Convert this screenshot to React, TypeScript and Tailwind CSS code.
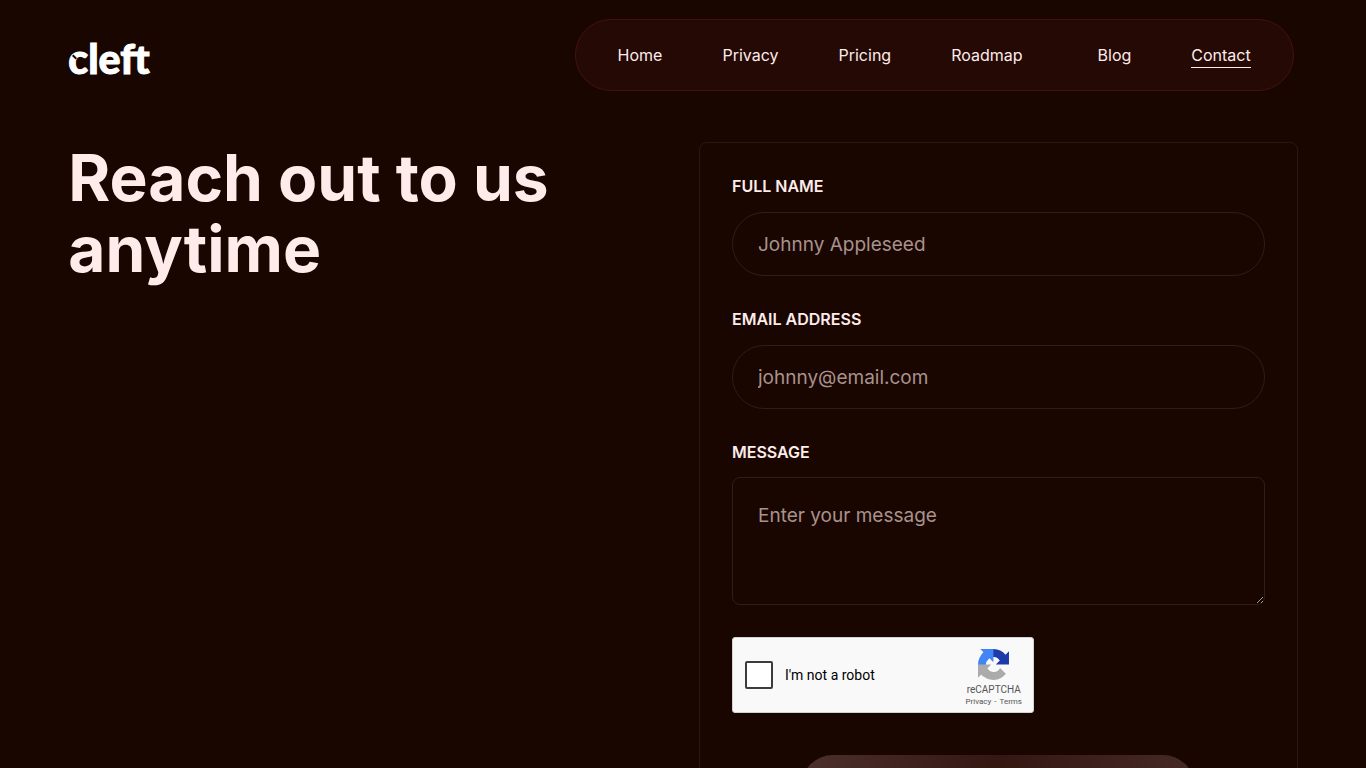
const links = [
  { title: "Home", href: "#home" },
  { title: "Privacy", href: "#privacy" },
  { title: "Pricing", href: "#pricing" },
  { title: "Roadmap", href: "#roadmap" },
  { title: "Blog", href: "#blog" },
  { title: "Contact", href: "#contact", active: true },
];

const labelClass = "block text-base leading-[22px] font-semibold uppercase text-[#feecea]";
const fieldClass =
  "block w-full border border-[#311c17] bg-transparent px-[25px] text-[19px] leading-[28px] text-[#feecea] placeholder:text-[#a8928e] outline-none focus:border-[#6b4a44]";

const Logo = () => (
  <a
    href="#home"
    className="relative mt-2 font-[Lato,sans-serif] text-[41px] leading-[48px] font-black text-white [-webkit-text-stroke:1px_white]"
  >
    cleft
    <span className="absolute left-1 top-[21px] h-[2px] w-[5px] rotate-45 bg-[#1a0600]" />
  </a>
);

const Header = () => (
  <header className="flex items-center justify-between pt-[19px] pr-1">
    <Logo />
    <nav className="flex h-[72px] items-center gap-[60px] rounded-full border border-[#43120f] bg-[#240905] px-[42px]">
      {links.map((link) => (
        <a
          key={link.title}
          href={link.href}
          className={
            link.active
              ? "border-b border-[#feecea] leading-6"
              : link.title === "Blog"
                ? "ml-[15px] border-b border-transparent leading-6"
                : "border-b border-transparent leading-6"
          }
        >
          {link.title}
        </a>
      ))}
    </nav>
  </header>
);

const RecaptchaIcon = () => (
  <svg viewBox="0 0 64 64" className="size-[31px]" aria-hidden="true">
    <path
      fill="#1c3aa9"
      d="M64 31.955l-.033-1.37V4.687l-7.16 7.16C50.948 4.674 42.033.093 32.05.093c-10.4 0-19.622 4.96-25.458 12.64l11.736 11.86a15.55 15.55 0 0 1 4.754-5.334c2.05-1.6 4.952-2.906 8.968-2.906.485 0 .86.057 1.135.163 4.976.393 9.288 3.14 11.828 7.124l-8.307 8.307L64 31.953"
    />
    <path
      fill="#4285f4"
      d="M31.862.094l-1.37.033H4.594l7.16 7.16C4.58 13.147 0 22.06 0 32.046c0 10.4 4.96 19.622 12.64 25.458L24.5 45.768a15.55 15.55 0 0 1-5.334-4.754c-1.6-2.05-2.906-4.952-2.906-8.968 0-.485.057-.86.163-1.135.393-4.976 3.14-9.288 7.124-11.828l8.307 8.307L31.86.095"
    />
    <path
      fill="#ababab"
      d="M.001 32.045l.033 1.37v25.898l7.16-7.16c5.86 7.173 14.774 11.754 24.76 11.754 10.4 0 19.622-4.96 25.458-12.64l-11.736-11.86a15.55 15.55 0 0 1-4.754 5.334c-2.05 1.6-4.952 2.906-8.968 2.906-.485 0-.86-.057-1.135-.163-4.976-.393-9.288-3.14-11.828-7.124l8.307-8.307c-10.522.04-22.4.066-27.295-.005"
    />
  </svg>
);

const Recaptcha = () => (
  <div className="flex h-[76px] w-[302px] items-center justify-between rounded-[3px] border border-[#d3d3d3] bg-[#f9f9f9] pr-[11px] pl-3 font-[Roboto,sans-serif]">
    <div className="flex items-center gap-3">
      <input
        id="robot"
        type="checkbox"
        className="size-7 appearance-none rounded-[2px] border-2 border-[#3c3c3c] bg-white checked:bg-[#4285f4]"
      />
      <label htmlFor="robot" className="text-sm leading-[17px] text-black">
        I'm not a robot
      </label>
    </div>
    <div className="flex flex-col items-center pt-[6px] text-[#555]">
      <RecaptchaIcon />
      <div className="mt-1 text-[10px] leading-[12px]">reCAPTCHA</div>
      <div className="flex gap-[3px] text-[8px] leading-[12px]">
        <a href="#privacy">Privacy</a>
        <span>-</span>
        <a href="#terms">Terms</a>
      </div>
    </div>
  </div>
);

const ContactForm = () => (
  <form className="rounded-lg border border-[#2b1712] p-8">
    <label htmlFor="name" className={labelClass}>
      Full Name
    </label>
    <input
      id="name"
      type="text"
      placeholder="Johnny Appleseed"
      className={`${fieldClass} mt-[15px] h-16 rounded-full`}
    />

    <label htmlFor="email" className={`${labelClass} mt-8`}>
      Email Address
    </label>
    <input
      id="email"
      type="email"
      placeholder="johnny@email.com"
      className={`${fieldClass} mt-[15px] h-16 rounded-full`}
    />

    <label htmlFor="message" className={`${labelClass} mt-8`}>
      Message
    </label>
    <textarea
      id="message"
      placeholder="Enter your message"
      className={`${fieldClass} mt-[14px] mb-8 h-32 resize rounded-lg py-6`}
    />

    <Recaptcha />

    <button
      type="submit"
      className="mx-auto mt-[42px] block h-16 w-full max-w-[394px] rounded-full bg-linear-to-r from-[#4c302c] via-[#351712] to-[#452925] text-lg leading-6 font-semibold text-[#feecea]"
    >
      Submit
    </button>
  </form>
);

const App = () => {
  return (
    <div className="min-h-screen bg-[#1a0600] px-[5%] font-[Inter,sans-serif] text-[#feecea]">
      <Header />
      <main className="grid grid-cols-2 gap-8 pt-[51px] pb-16">
        <h1 className="text-[64px] leading-[71px] font-bold">Reach out to us anytime</h1>
        <ContactForm />
      </main>
    </div>
  );
};

export default App;
